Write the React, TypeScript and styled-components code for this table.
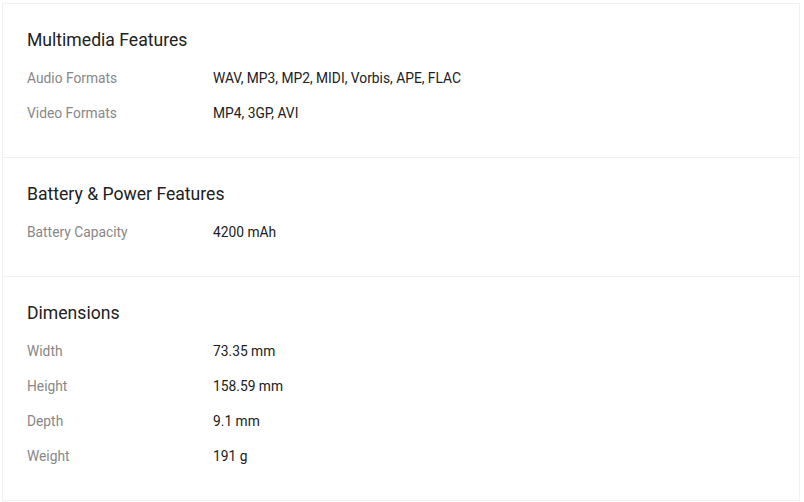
import React from "react";
import styled, { createGlobalStyle } from "styled-components";

const Global = createGlobalStyle`
  html, body { margin: 0; padding: 0; background: #ffffff; }
  body { font-family: Roboto, "Liberation Sans", Arial, sans-serif; }
`;

const Page = styled.div`
  padding: 3px 4px 0 2px;
`;

const Card = styled.div`
  border: 1px solid #f0f0f0;
  background: #fff;
`;

const Section = styled.section<{ $first?: boolean }>`
  padding: 24px 24px 26px 24px;
  border-top: ${(p) => (p.$first ? "none" : "1px solid #f0f0f0")};
`;

const Title = styled.h2`
  margin: 0 0 9px 0;
  font-size: 17.6px;
  line-height: 24px;
  font-weight: 400;
  color: #212121;
`;

const Row = styled.div`
  display: flex;
  padding: 8px 0;
  font-size: 13.8px;
  line-height: 19px;
`;

const Label = styled.div`
  width: 186px;
  flex-shrink: 0;
  color: #878787;
`;

const Value = styled.div`
  color: #212121;
`;

const data: { title: string; rows: [string, string][] }[] = [
  {
    title: "Multimedia Features",
    rows: [
      ["Audio Formats", "WAV, MP3, MP2, MIDI, Vorbis, APE, FLAC"],
      ["Video Formats", "MP4, 3GP, AVI"],
    ],
  },
  {
    title: "Battery & Power Features",
    rows: [["Battery Capacity", "4200 mAh"]],
  },
  {
    title: "Dimensions",
    rows: [
      ["Width", "73.35 mm"],
      ["Height", "158.59 mm"],
      ["Depth", "9.1 mm"],
      ["Weight", "191 g"],
    ],
  },
];

export default function App() {
  return (
    <Page>
      <Global />
      <Card>
        {data.map((s, i) => (
          <Section key={s.title} $first={i === 0}>
            <Title>{s.title}</Title>
            {s.rows.map(([l, v]) => (
              <Row key={l}>
                <Label>{l}</Label>
                <Value>{v}</Value>
              </Row>
            ))}
          </Section>
        ))}
      </Card>
    </Page>
  );
}
